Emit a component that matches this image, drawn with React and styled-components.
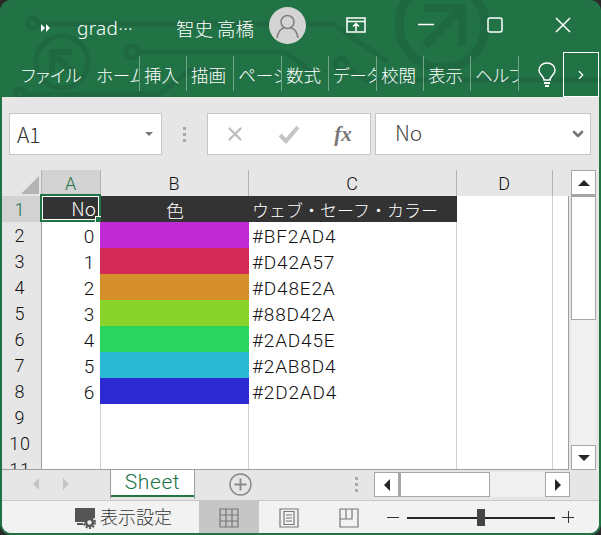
import React from 'react'
import styled, {createGlobalStyle} from 'styled-components'
import {ChevronRight, X, ChevronDown} from 'lucide-react'

const jp = `"Noto Sans CJK JP", "Noto Sans", sans-serif`
const cellFont = `Roboto, "Noto Sans CJK JP", sans-serif`

const Global = createGlobalStyle`
    html, body {
        margin: 0;
        padding: 0;
        background: #2a2a2a;
    }
    * {
        box-sizing: border-box;
    }
`

const Window = styled.div`
    position: relative;
    width: 601px;
    height: 535px;
    background: #217346;
    border-radius: 11px;
    overflow: hidden;
    display: flex;
    flex-direction: column;
    font-family: ${jp};
    color: #fff;
`

const Art = styled.svg`
    position: absolute;
    left: 0;
    top: 0;
    pointer-events: none;
`

const TitleBar = styled.div`
    position: relative;
    height: 52px;
    flex: none;
    display: flex;
    align-items: center;
    padding: 3px 0 0 41px;
`

const Skip = styled.svg`
    width: 9px;
    height: 8px;
    margin-right: 27px;
    flex: none;
`

const DocName = styled.span`
    width: 99px;
    flex: none;
    font-size: 19px;
    font-family: "Noto Sans", sans-serif;
    font-weight: 300;
    letter-spacing: 0.3px;
`

const UserName = styled.span`
    width: 93px;
    flex: none;
    font-size: 18.5px;
    font-weight: 300;
    white-space: nowrap;
`

const Avatar = styled.svg`
    width: 37px;
    height: 37px;
    flex: none;
    margin-right: 10px;
    margin-top: -4px;
`

const WinBtn = styled.button`
    width: ${p => p.$w}px;
    flex: none;
    height: 20px;
    padding: 0;
    margin-top: -5px;
    border: 0;
    background: none;
    color: #fff;
    display: flex;
    justify-content: center;
    align-items: center;
`

const TabBar = styled.div`
    position: relative;
    height: 45px;
    flex: none;
    display: flex;
    align-items: center;
    padding-left: 21px;
`

const RibbonTab = styled.div`
    width: ${p => p.$w}px;
    height: 35px;
    line-height: 35px;
    font-size: 17.5px;
    font-weight: 300;
    font-feature-settings: "palt";
    white-space: nowrap;
    overflow: hidden;
    flex: none;
`

const Sep = styled.div`
    width: 1px;
    height: 35px;
    margin: -2px 4px 0 0;
    background: #6fa588;
    flex: none;
`

const Bulb = styled.svg`
    width: 18px;
    height: 25px;
    margin: 0 3px 0 15px;
    flex: none;
`

const More = styled.div`
    width: 36px;
    height: 45px;
    margin: 0 0 0 4px;
    border: 1px solid #fff;
    display: flex;
    align-items: center;
    justify-content: center;
    flex: none;
`

const Body = styled.div`
    position: relative;
    flex: 1;
    margin: 0 2px 2px;
    background: #e6e6e6;
    border-radius: 0 0 9px 9px;
    overflow: hidden;
    display: flex;
    flex-direction: column;
`

const FormulaRow = styled.div`
    height: 73px;
    flex: none;
    display: flex;
    padding: 16px 5px 0 7px;
    color: #444;
`

const Field = styled.div`
    height: 42px;
    width: ${p => p.$w}px;
    margin-left: ${p => p.$ml || 0}px;
    background: #fff;
    border: 1px solid #c6c6c6;
    display: flex;
    align-items: center;
    flex: none;
`

const NameText = styled.span`
    flex: 1;
    padding-left: 7px;
    font-size: 21px;
    font-weight: 300;
    color: #333;
`

const Caret = styled.span`
    width: 0;
    height: 0;
    margin-right: 8px;
    border-left: 4px solid transparent;
    border-right: 4px solid transparent;
    border-top: 4px solid #777;
`

const Grip = styled.div`
    width: 45px;
    display: flex;
    flex-direction: column;
    align-items: center;
    justify-content: center;
    gap: 3px;
    height: 42px;
    flex: none;
    span {
        width: 3px;
        height: 3px;
        background: #a8a8a8;
    }
`

const FxBtn = styled.div`
    width: 54px;
    display: flex;
    justify-content: center;
    color: #bdbdbd;
`

const FxText = styled.span`
    font-family: "Liberation Serif", serif;
    font-style: italic;
    font-weight: bold;
    font-size: 21px;
    color: #777;
`

const FormulaText = styled.span`
    flex: 1;
    padding-left: 19px;
    margin-top: -4px;
    font-size: 21px;
    font-weight: 300;
    color: #444;
`

const FieldChevron = styled(ChevronDown)`
    margin-right: 4px;
    color: #777;
`

const SheetArea = styled.div`
    height: 300px;
    flex: none;
    display: flex;
`

const Grid = styled.div`
    position: relative;
    width: 567px;
    height: 300px;
    flex: none;
    overflow: hidden;
    background: #fff;
    border-bottom: 1px solid #9e9e9e;
`

const Row = styled.div`
    display: grid;
    grid-template-columns: 40px 59px 148px 208px 96px 16px;
    height: ${p => p.$h}px;
    font-family: ${cellFont};
    font-weight: 300;
    font-size: 19px;
    letter-spacing: 0.8px;
    color: #111;
`

const ColHead = styled.div`
    background: ${p => (p.$active ? '#d2d2d2' : '#e6e6e6')};
    color: ${p => (p.$active ? '#217346' : '#111')};
    border-right: 1px solid ${p => (p.$last ? '#e6e6e6' : '#b4b4b4')};
    border-bottom: 2px solid #9e9e9e;
    text-align: center;
    line-height: 27px;
    font-size: 18px;
`

const Corner = styled.div`
    background: #e6e6e6;
    border-right: 1px solid #b4b4b4;
    border-bottom: 2px solid #9e9e9e;
    display: flex;
    align-items: flex-end;
    justify-content: flex-end;
    padding: 0 2px 3px 0;
    span {
        width: 0;
        height: 0;
        border-left: 18px solid transparent;
        border-bottom: 18px solid #b4b4b4;
    }
`

const RowHead = styled.div`
    background: ${p => (p.$active ? '#d2d2d2' : '#e6e6e6')};
    color: ${p => (p.$active ? '#217346' : '#111')};
    border-right: 1px solid #9e9e9e;
    border-bottom: 1px solid #a8a8a8;
    text-align: center;
    line-height: 27px;
    padding-right: 3px;
    font-size: 18px;
`

const Cell = styled.div`
    position: relative;
    border-right: 1px solid ${p => p.$fill || (p.$edge ? '#9e9e9e' : '#cfcfcf')};
    border-bottom: 1px solid ${p => p.$fill || '#cfcfcf'};
    background: ${p => p.$fill || '#fff'};
    box-shadow: ${p => (p.$fill ? `-1px 0 0 ${p.$fill}` : 'none')};
    line-height: 29px;
    padding: 0 ${p => (p.$right ? 5 : 3)}px 0 3px;
    text-align: ${p => (p.$right ? 'right' : 'left')};
    white-space: nowrap;
    overflow: ${p => (p.$fill ? 'visible' : 'hidden')};
`

const HeadCell = styled.div`
    position: relative;
    background: #333;
    color: #fff;
    border-bottom: 1px solid #333;
    font-family: ${jp};
    letter-spacing: 0;
    line-height: ${p => p.$lh || 28}px;
    font-size: ${p => p.$size || 17}px;
    padding: 0 ${p => (p.$right ? 5 : 3)}px 0 3px;
    text-align: ${p => (p.$right ? 'right' : p.$center ? 'center' : 'left')};
    white-space: nowrap;
`

const Selection = styled.div`
    position: absolute;
    left: -2px;
    top: -2px;
    width: 61px;
    height: 28px;
    border: 2px solid #217346;
    outline: 1px solid #fff;
    outline-offset: -3px;
`

const Handle = styled.div`
    position: absolute;
    right: -4px;
    bottom: -4px;
    width: 8px;
    height: 8px;
    background: #217346;
    border: 1px solid #fff;
`

const VScroll = styled.div`
    margin-left: 2px;
    width: 25px;
    height: 300px;
    flex: none;
    background: #f0f0f0;
    display: flex;
    flex-direction: column;
`

const ScrollBtn = styled.div`
    width: 25px;
    height: 25px;
    flex: none;
    background: #fff;
    border: 1px solid #a6a6a6;
    display: flex;
    align-items: center;
    justify-content: center;
`

const VThumb = styled.div`
    width: 25px;
    height: 125px;
    flex: none;
    background: #fff;
    border: 1px solid #a6a6a6;
    border-top-width: 2px;
`

const Spacer = styled.div`
    flex: 1;
`

const Tri = styled.span`
    width: 0;
    height: 0;
    ${p => {
        const c = p.$color || '#262626'
        const s = p.$size || 6
        if (p.$dir === 'up') return `border-left:${s}px solid transparent;border-right:${s}px solid transparent;border-bottom:${s}px solid ${c};`
        if (p.$dir === 'down') return `border-left:${s}px solid transparent;border-right:${s}px solid transparent;border-top:${s}px solid ${c};`
        if (p.$dir === 'left') return `border-top:${s}px solid transparent;border-bottom:${s}px solid transparent;border-right:${s}px solid ${c};`
        return `border-top:${s}px solid transparent;border-bottom:${s}px solid transparent;border-left:${s}px solid ${c};`
    }}
`

const TabStrip = styled.div`
    height: 31px;
    flex: none;
    display: flex;
    background: #e6e6e6;
    border-bottom: 1px solid #c8c8c8;
`

const NavArrows = styled.div`
    width: 109px;
    height: 30px;
    border-right: 1px solid #9e9e9e;
    display: flex;
    align-items: center;
    justify-content: center;
    gap: 24px;
    padding-right: 10px;
    margin-top: -1px;
    flex: none;
`

const SheetTab = styled.div`
    width: 83px;
    height: 27px;
    flex: none;
    background: #fff;
    border-bottom: 2px solid #217346;
    color: #217346;
    text-align: center;
    font-family: Roboto, sans-serif;
    font-weight: 300;
    letter-spacing: 0.6px;
    font-size: 21px;
    line-height: 24px;
`

const TabRest = styled.div`
    width: 373px;
    margin-top: -1px;
    border-left: 1px solid #9e9e9e;
    display: flex;
    align-items: center;
    height: 30px;
    flex: none;
`

const AddSheet = styled.svg`
    width: 23px;
    height: 23px;
    margin: 0 0 0 34px;
    flex: none;
`

const StripGrip = styled(Grip)`
    width: 6px;
    height: 24px;
    margin-left: 101px;
    margin-right: 15px;
`

const HScroll = styled.div`
    margin-top: 1px;
    width: 196px;
    height: 25px;
    background: #f0f0f0;
    display: flex;
    flex: none;
`

const HThumb = styled.div`
    width: 91px;
    height: 25px;
    background: #fff;
    border: 1px solid #a6a6a6;
    border-left-width: 2px;
    flex: none;
`

const StatusBar = styled.div`
    flex: 1;
    display: flex;
    align-items: center;
    background: #f2f2f2;
    color: #333;
    padding-left: 72px;
`

const StatusText = styled.span`
    font-size: 18px;
    font-weight: 300;
    width: 99px;
    margin: -3px 0 0 3px;
    flex: none;
`

const ViewBtn = styled.div`
    width: 60px;
    height: 33px;
    flex: none;
    display: flex;
    align-items: center;
    justify-content: center;
    background: ${p => (p.$active ? '#c6c6c6' : 'transparent')};
`

const Zoom = styled.div`
    margin-left: 8px;
    display: flex;
    align-items: center;
    flex: none;
`

const ZoomSign = styled.svg`
    width: 13px;
    height: 13px;
    flex: none;
`

const Track = styled.div`
    position: relative;
    width: 148px;
    height: 2px;
    margin: 0 7px;
    background: #262626;
    flex: none;
`

const Knob = styled.div`
    position: absolute;
    left: 70px;
    top: -8px;
    width: 8px;
    height: 17px;
    background: #444;
`

const rows = [
    {no: 0, color: '#BF2AD4'},
    {no: 1, color: '#D42A57'},
    {no: 2, color: '#D48E2A'},
    {no: 3, color: '#88D42A'},
    {no: 4, color: '#2AD45E'},
    {no: 5, color: '#2AB8D4'},
    {no: 6, color: '#2D2AD4'},
]

const tabs = [
    {name: '挿入', w: 42},
    {name: '描画', w: 42},
    {name: 'ページ', w: 43},
    {name: '数式', w: 42},
    {name: 'データ', w: 43},
    {name: '校閲', w: 42},
    {name: '表示', w: 42},
    {name: 'ヘルプ', w: 43},
]

function CircuitArt() {
    return (
        <Art width="601" height="97" viewBox="0 0 601 97" fill="none" stroke="#1f6942" strokeWidth="5">
            <circle cx="33" cy="23" r="5"/>
            <path d="M38 24H333L388 62"/>
            <circle cx="62" cy="62" r="26"/>
            <path d="M72 52H52V72" strokeWidth="6"/>
            <path d="M52 52L78 78" strokeWidth="7"/>
            <circle cx="132" cy="52" r="6"/>
            <path d="M138 52H285L312 72"/>
            <circle cx="20" cy="94" r="5"/>
            <path d="M25 94H160L190 70H220"/>
            <circle cx="341" cy="64" r="6"/>
            <path d="M346 68L366 80H601"/>
            <circle cx="442" cy="25" r="43" strokeWidth="9"/>
            <path d="M425 8H462V45" strokeWidth="8"/>
            <path d="M462 8L425 45" strokeWidth="9"/>
        </Art>
    )
}

function App() {
    return (
        <Window>
            <Global/>
            <CircuitArt/>
            <TitleBar>
                <Skip viewBox="0 0 9 8" fill="#fff"><path d="M0 0L4 4L0 8ZM5 0L9 4L5 8Z"/></Skip>
                <DocName>grad···</DocName>
                <UserName>智史 高橋</UserName>
                <Avatar viewBox="0 0 37 37">
                    <circle cx="18.5" cy="18.5" r="18.5" fill="#d4d4d4"/>
                    <circle cx="18.5" cy="15" r="6.5" fill="none" stroke="#808080" strokeWidth="1.6"/>
                    <path d="M8 31c1-7 5-9.5 7-10M29 31c-1-7-5-9.5-7-10" fill="none" stroke="#808080" strokeWidth="1.6"/>
                </Avatar>
                <WinBtn $w={80}>
                    <svg width="20" height="16" viewBox="0 0 20 16" fill="none" stroke="#fff" strokeWidth="1.5">
                        <path d="M1 1H19V15H1ZM1 4.5H19M10 14V7M7 9.5L10 6.5L13 9.5"/>
                    </svg>
                </WinBtn>
                <WinBtn $w={60}>
                    <svg width="16" height="4" viewBox="0 0 16 4" fill="none" stroke="#fff" strokeWidth="1.5">
                        <path d="M0 1.5H16"/>
                    </svg>
                </WinBtn>
                <WinBtn $w={78}>
                    <svg width="16" height="16" viewBox="0 0 16 16" fill="none" stroke="#fff" strokeWidth="1.5">
                        <rect x="1" y="1" width="14" height="14" rx="2"/>
                    </svg>
                </WinBtn>
                <WinBtn $w={58}>
                    <svg width="16" height="16" viewBox="0 0 16 16" fill="none" stroke="#fff" strokeWidth="1.5">
                        <path d="M1 1L15 15M15 1L1 15"/>
                    </svg>
                </WinBtn>
            </TitleBar>
            <TabBar>
                <RibbonTab $w={75}>ファイル</RibbonTab>
                <RibbonTab $w={43}>ホーム</RibbonTab>
                {tabs.map(tab => (
                    <React.Fragment key={tab.name}>
                        <Sep/>
                        <RibbonTab $w={tab.w}>{tab.name}</RibbonTab>
                    </React.Fragment>
                ))}
                <Sep/>
                <Bulb viewBox="0 0 18 25" fill="none" stroke="#fff" strokeWidth="1.5">
                    <path d="M6 18C6 14 1 12.500 1 8.500C1 4 4.500 1 9 1S17 4 17 8.500C17 12.500 12 14 12 18Z"/>
                    <path d="M6 21H12M7 24H11" strokeWidth="2"/>
                </Bulb>
                <More><ChevronRight size={14} color="#fff"/></More>
            </TabBar>
            <Body>
                <FormulaRow>
                    <Field $w={153}>
                        <NameText>A1</NameText>
                        <Caret/>
                    </Field>
                    <Grip><span/><span/><span/></Grip>
                    <Field $w={164}>
                        <FxBtn><X size={22} strokeWidth={2.5}/></FxBtn>
                        <FxBtn>
                            <svg width="24" height="20" viewBox="0 0 24 20" fill="none" stroke="#c4c4c4" strokeWidth="4">
                                <path d="M3 11L9 17L21 3"/>
                            </svg>
                        </FxBtn>
                        <FxBtn><FxText>fx</FxText></FxBtn>
                    </Field>
                    <Field $w={216} $ml={4}>
                        <FormulaText>No</FormulaText>
                        <FieldChevron size={16} strokeWidth={4}/>
                    </Field>
                </FormulaRow>
                <SheetArea>
                    <Grid>
                        <Row $h={26}>
                            <Corner><span/></Corner>
                            <ColHead $active>A</ColHead>
                            <ColHead>B</ColHead>
                            <ColHead>C</ColHead>
                            <ColHead>D</ColHead>
                            <ColHead $last/>
                        </Row>
                        <Row $h={26}>
                            <RowHead $active>1</RowHead>
                            <HeadCell $right $size={19} $lh={23}>
                                No
                                <Selection><Handle/></Selection>
                            </HeadCell>
                            <HeadCell $center $size={18} $lh={29}>色</HeadCell>
                            <HeadCell>ウェブ・セーフ・カラー</HeadCell>
                            <Cell/>
                            <Cell $edge/>
                        </Row>
                        {rows.map((row, idx) => (
                            <Row $h={26} key={row.no}>
                                <RowHead>{idx + 2}</RowHead>
                                <Cell $right>{row.no}</Cell>
                                <Cell $fill={row.color}/>
                                <Cell>{row.color}</Cell>
                                <Cell/>
                                <Cell $edge/>
                            </Row>
                        ))}
                        {[9, 10, 11].map(n => (
                            <Row $h={26} key={n}>
                                <RowHead>{n}</RowHead>
                                <Cell/>
                                <Cell/>
                                <Cell/>
                                <Cell/>
                                <Cell $edge/>
                            </Row>
                        ))}
                    </Grid>
                    <VScroll>
                        <ScrollBtn><Tri $dir="up"/></ScrollBtn>
                        <VThumb/>
                        <Spacer/>
                        <ScrollBtn><Tri $dir="down"/></ScrollBtn>
                    </VScroll>
                </SheetArea>
                <TabStrip>
                    <NavArrows>
                        <Tri $dir="left" $color="#c4c4c4"/>
                        <Tri $dir="right" $color="#c4c4c4"/>
                    </NavArrows>
                    <SheetTab>Sheet</SheetTab>
                    <TabRest>
                        <AddSheet viewBox="0 0 23 23" fill="none" stroke="#888" strokeWidth="1.4">
                            <circle cx="11.5" cy="11.5" r="10.5"/>
                            <path d="M11.5 5.5V17.5M5.5 11.5H17.5" strokeWidth="1.8"/>
                        </AddSheet>
                        <StripGrip><span/><span/><span/></StripGrip>
                        <HScroll>
                            <ScrollBtn><Tri $dir="left"/></ScrollBtn>
                            <HThumb/>
                            <Spacer/>
                            <ScrollBtn><Tri $dir="right"/></ScrollBtn>
                        </HScroll>
                    </TabRest>
                </TabStrip>
                <StatusBar>
                    <svg width="23" height="22" viewBox="0 0 23 22" fill="#555">
                        <path d="M1 1H21V11H14L11 15H1ZM3 16H9V18H3Z"/>
                        <circle cx="15.500" cy="15.500" r="3.500" fill="none" stroke="#555" strokeWidth="2.500"/>
                        <circle cx="15.500" cy="15.500" r="5.500" fill="none" stroke="#555" strokeWidth="2" strokeDasharray="2 1.450"/>
                    </svg>
                    <StatusText>表示設定</StatusText>
                    <ViewBtn $active>
                        <svg width="20" height="20" viewBox="0 0 20 20" fill="none" stroke="#777" strokeWidth="1.2">
                            <path d="M1 1H19V19H1ZM7 1V19M13 1V19M1 7H19M1 13H19"/>
                        </svg>
                    </ViewBtn>
                    <ViewBtn>
                        <svg width="20" height="20" viewBox="0 0 20 20" fill="none" stroke="#777" strokeWidth="1.2">
                            <path d="M1 1H19V19H1ZM5 3.500H15V16.500H5ZM7 7H13M7 10H13M7 13H13"/>
                        </svg>
                    </ViewBtn>
                    <ViewBtn>
                        <svg width="20" height="20" viewBox="0 0 20 20" fill="none" stroke="#777" strokeWidth="1.2">
                            <path d="M1 1H19V19H1ZM1 11H13V1M7 1V11"/>
                        </svg>
                    </ViewBtn>
                    <Zoom>
                        <ZoomSign viewBox="0 0 13 13" stroke="#333" strokeWidth="1"><path d="M0 6.500H12"/></ZoomSign>
                        <Track><Knob/></Track>
                        <ZoomSign viewBox="0 0 13 13" stroke="#333" strokeWidth="1"><path d="M0 6.500H12M6.500 0V12"/></ZoomSign>
                    </Zoom>
                </StatusBar>
            </Body>
        </Window>
    )
}

export default App
